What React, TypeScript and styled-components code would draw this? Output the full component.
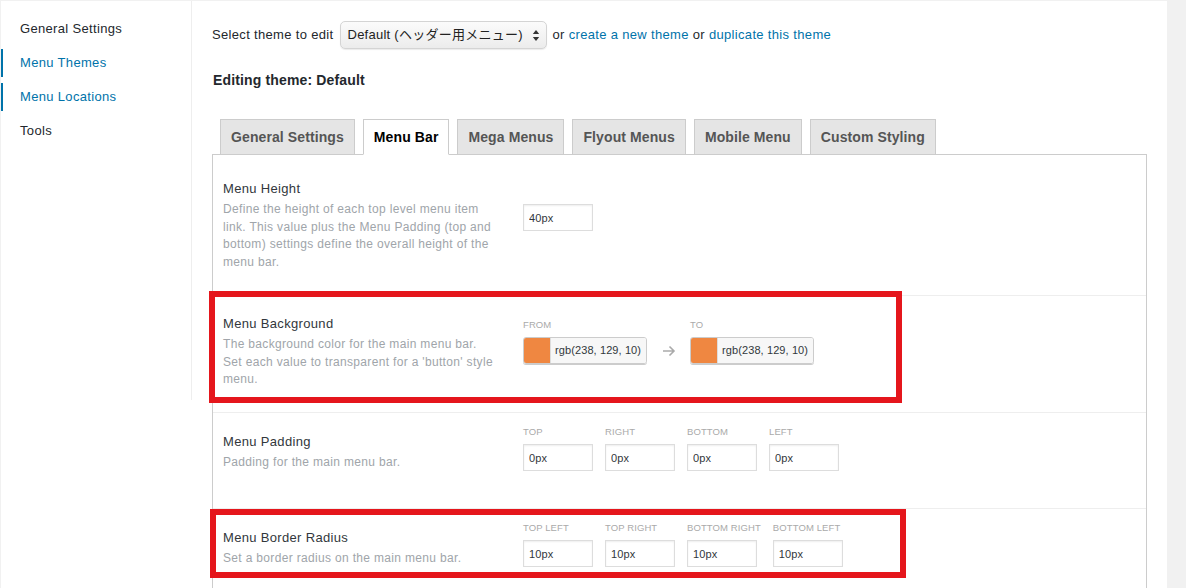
import React from "react"
import styled, { createGlobalStyle } from "styled-components"

const LINK = "#0073aa"

const GlobalStyle = createGlobalStyle`
    html, body {
        margin: 0;
        padding: 0;
        background: #f1f1f1;
    }
    body {
        font-family: "Liberation Sans", Arial, "Noto Sans CJK JP", sans-serif;
        font-size: 13px;
        letter-spacing: 0.33px;
        color: #23282d;
    }
`

const Page = styled('div')`
    display: flex;
    align-items: flex-start;
    width: 1166px;
    height: 587px;
    margin: 1px 0 0 1px;
    background: #fff;
    overflow: hidden;
`

const Sidebar = styled('ul')`
    flex-shrink: 0;
    width: 191px;
    height: 399px;
    box-sizing: border-box;
    margin: 0;
    padding: 14px 0 0;
    list-style: none;
    border-right: 1px solid #eee;
`

const SideItem = styled('li')<{ $active?: boolean }>`
    height: 28px;
    line-height: 28px;
    margin-bottom: 6px;
    padding-left: 17px;
    border-left: 2px solid ${p => (p.$active ? LINK : "transparent")};
    color: ${p => (p.$active ? LINK : "#23282d")};
`

const Main = styled('main')`
    flex: 1;
    align-self: stretch;
    display: flex;
    flex-direction: column;
    padding: 0 20px;
`

const ThemeBar = styled('div')`
    display: flex;
    align-items: center;
    height: 28px;
    margin-top: 20px;
    line-height: 16px;
    white-space: pre;
`

const SelectBox = styled('div')`
    display: flex;
    align-items: center;
    justify-content: space-between;
    width: 207px;
    height: 28px;
    box-sizing: border-box;
    margin: 0 6px 0 6px;
    padding: 0 6px 0 7px;
    border: 1px solid #d4d4d4;
    border-radius: 5px;
    background: linear-gradient(#fbfbfb, #ececec);
    box-shadow: 0 1px 1px rgba(0, 0, 0, 0.08);
    font-size: 13px;
    letter-spacing: 0.25px;
    color: #222;
`

const Link = styled('a')`
    color: ${LINK};
    text-decoration: none;
`

const EditingTitle = styled('h3')`
    margin: 21px 0 0 1px;
    font-size: 14px;
    line-height: 20px;
    font-weight: 700;
    letter-spacing: 0.15px;
    color: #23282d;
`

const TabBar = styled('div')`
    display: flex;
    margin-top: 29px;
`

const Tab = styled('div')<{ $active?: boolean }>`
    position: ${p => (p.$active ? "relative" : "static")};
    height: 36px;
    box-sizing: border-box;
    margin: 0 0 -1px 8px;
    padding: 0 10px;
    border: 1px solid #ccc;
    border-bottom-color: ${p => (p.$active ? "#fff" : "#ccc")};
    background: ${p => (p.$active ? "#fff" : "#e5e5e5")};
    color: ${p => (p.$active ? "#000" : "#555")};
    font-size: 14px;
    font-weight: 700;
    letter-spacing: 0.1px;
    line-height: 34px;
`

const Panel = styled('section')`
    flex: 1;
    border: 1px solid #ccc;
    border-bottom: none;
`

const Row = styled('div')<{ $height?: number }>`
    position: relative;
    display: flex;
    align-items: flex-start;
    height: ${p => (p.$height ? `${p.$height}px` : "auto")};
    padding: 0 10px;
    border-bottom: 1px solid #eee;

    &:last-child {
        border-bottom: none;
    }
`

const LabelCell = styled('div')<{ $top: number }>`
    width: 300px;
    flex-shrink: 0;
    padding-top: ${p => p.$top}px;
`

const SettingTitle = styled('div')`
    font-size: 13px;
    line-height: 18px;
    color: #32373c;
`

const SettingDesc = styled('div')`
    width: 272px;
    margin-top: 3px;
    font-size: 12px;
    line-height: 17.6px;
    color: #a0a5aa;
`

const Controls = styled('div')<{ $top: number }>`
    display: flex;
    align-items: flex-end;
    padding-top: ${p => p.$top}px;
`

const Field = styled('div')`
    display: flex;
    flex-direction: column;
    min-width: 70px;
    margin-right: 12px;
`

const FieldLabel = styled('span')`
    margin-bottom: 6px;
    font-size: 9.5px;
    line-height: 13px;
    letter-spacing: 0.1px;
    text-transform: uppercase;
    white-space: nowrap;
    color: #aaa;
`

const TextInput = styled('input')`
    width: 70px;
    height: 27px;
    box-sizing: border-box;
    margin: 0;
    padding: 0 5px;
    border: 1px solid #ddd;
    border-radius: 0;
    box-shadow: inset 0 1px 2px rgba(0, 0, 0, 0.07);
    font-family: "Liberation Sans", Arial, sans-serif;
    font-size: 11px;
    letter-spacing: 0.1px;
    color: #32373c;
    outline: none;
`

const Picker = styled('div')`
    display: flex;
    width: 124px;
    height: 27px;
    box-sizing: border-box;
    border: 1px solid #ccc;
    border-radius: 3px;
    box-shadow: 0 1px 0 #ccc;
    overflow: hidden;
`

const Swatch = styled('span')<{ $color: string }>`
    width: 26px;
    flex-shrink: 0;
    background: ${p => p.$color};
    border-right: 1px solid #ddd;
`

const PickerValue = styled('span')`
    flex: 1;
    padding-left: 4px;
    background: #f7f7f7;
    font-size: 11px;
    line-height: 25px;
    letter-spacing: 0.1px;
    color: #32373c;
    white-space: nowrap;
`

const ArrowSlot = styled('div')`
    display: flex;
    align-items: center;
    justify-content: center;
    width: 43px;
    height: 27px;
    margin-left: -12px;
`

const Highlight = styled('div')<{ $left: number; $top: number; $w: number; $h: number }>`
    position: absolute;
    left: ${p => p.$left}px;
    top: ${p => p.$top}px;
    width: ${p => p.$w}px;
    height: ${p => p.$h}px;
    box-sizing: border-box;
    border: 6px solid #e5161c;
    pointer-events: none;
`

const SelectArrows = () => (
    <svg width="8" height="13" viewBox="0 0 8 13">
        <path d="M4 1 L7.2 5 H0.8 Z" fill="#333" />
        <path d="M4 12 L7.2 8 H0.8 Z" fill="#333" />
    </svg>
)

const ArrowRight = () => (
    <svg width="14" height="12" viewBox="0 0 14 12">
        <path d="M1 6 H12 M7.5 1.5 L12 6 L7.5 10.5" fill="none" stroke="#aaa" strokeWidth="1.6" />
    </svg>
)

const ColorField: React.FC<{ label: string; color: string; value: string }> = ({ label, color, value }) => (
    <Field>
        <FieldLabel>{label}</FieldLabel>
        <Picker>
            <Swatch $color={color} />
            <PickerValue>{value}</PickerValue>
        </Picker>
    </Field>
)

const SizeField: React.FC<{ label: string; value: string }> = ({ label, value }) => (
    <Field>
        <FieldLabel>{label}</FieldLabel>
        <TextInput defaultValue={value} />
    </Field>
)

const tabs = ["General Settings", "Menu Bar", "Mega Menus", "Flyout Menus", "Mobile Menu", "Custom Styling"]

export default function App() {
    return (
        <>
            <GlobalStyle />
            <Page>
                <Sidebar>
                    <SideItem>General Settings</SideItem>
                    <SideItem $active>Menu Themes</SideItem>
                    <SideItem $active>Menu Locations</SideItem>
                    <SideItem>Tools</SideItem>
                </Sidebar>
                <Main>
                    <ThemeBar>
                        Select theme to edit
                        <SelectBox>
                            <span>Default (ヘッダー用メニュー)</span>
                            <SelectArrows />
                        </SelectBox>
                        or <Link href="#">create a new theme</Link> or <Link href="#">duplicate this theme</Link>
                    </ThemeBar>
                    <EditingTitle>Editing theme: Default</EditingTitle>
                    <TabBar>
                        {tabs.map(t => (
                            <Tab key={t} $active={t === "Menu Bar"}>{t}</Tab>
                        ))}
                    </TabBar>
                    <Panel>
                        <Row $height={140}>
                            <LabelCell $top={25}>
                                <SettingTitle>Menu Height</SettingTitle>
                                <SettingDesc>
                                    Define the height of each top level menu item link. This value plus the Menu Padding (top and bottom) settings define the overall height of the menu bar.
                                </SettingDesc>
                            </LabelCell>
                            <Controls $top={49}>
                                <TextInput defaultValue="40px" />
                            </Controls>
                        </Row>
                        <Row $height={116}>
                            <Highlight $left={-4} $top={-5} $w={693} $h={112} />
                            <LabelCell $top={19}>
                                <SettingTitle>Menu Background</SettingTitle>
                                <SettingDesc>
                                    The background color for the main menu bar. Set each value to transparent for a 'button' style menu.
                                </SettingDesc>
                            </LabelCell>
                            <Controls $top={22}>
                                <ColorField label="From" color="#ef8741" value="rgb(238, 129, 10)" />
                                <ArrowSlot>
                                    <ArrowRight />
                                </ArrowSlot>
                                <ColorField label="To" color="#ef8741" value="rgb(238, 129, 10)" />
                            </Controls>
                        </Row>
                        <Row $height={95}>
                            <LabelCell $top={20}>
                                <SettingTitle>Menu Padding</SettingTitle>
                                <SettingDesc>Padding for the main menu bar.</SettingDesc>
                            </LabelCell>
                            <Controls $top={12}>
                                <SizeField label="Top" value="0px" />
                                <SizeField label="Right" value="0px" />
                                <SizeField label="Bottom" value="0px" />
                                <SizeField label="Left" value="0px" />
                            </Controls>
                        </Row>
                        <Row>
                            <Highlight $left={-3} $top={0} $w={696} $h={69} />
                            <LabelCell $top={20}>
                                <SettingTitle>Menu Border Radius</SettingTitle>
                                <SettingDesc>Set a border radius on the main menu bar.</SettingDesc>
                            </LabelCell>
                            <Controls $top={12}>
                                <SizeField label="Top Left" value="10px" />
                                <SizeField label="Top Right" value="10px" />
                                <SizeField label="Bottom Right" value="10px" />
                                <SizeField label="Bottom Left" value="10px" />
                            </Controls>
                        </Row>
                    </Panel>
                </Main>
            </Page>
        </>
    )
}
